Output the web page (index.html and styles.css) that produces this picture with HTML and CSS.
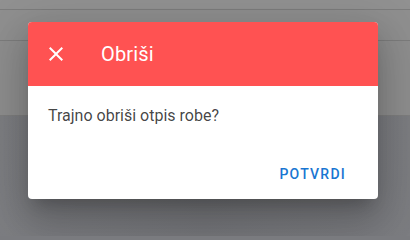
FILE: index.html
```html
<!DOCTYPE html>
<html lang="hr">
<head>
<meta charset="utf-8">
<title>Obriši</title>
<link rel="stylesheet" href="styles.css">
</head>
<body>
<div class="page">
  <div class="bg-top"></div>
  <div class="bg-head"><span class="bg-label">NAZIV ARTIKLA</span></div>
  <div class="bg-row"></div>
  <div class="bg-rest"></div>
</div>
<div class="dialog">
  <div class="dialog-bar">
    <button class="close-btn" aria-label="Zatvori">
      <svg viewBox="0 0 24 24" width="24" height="24"><path d="M19 6.41L17.59 5 12 10.59 6.41 5 5 6.41 10.59 12 5 17.59 6.41 19 12 13.41 17.59 19 19 17.59 13.41 12z" fill="#fff"/></svg>
    </button>
    <div class="dialog-title">Obriši</div>
  </div>
  <div class="dialog-text">Trajno obriši otpis robe?</div>
  <div class="dialog-actions">
    <button class="confirm-btn">Potvrdi</button>
  </div>
</div>
</body>
</html>
```
FILE: styles.css
```css
html {
  background: #7a7b7f;
}
html, body {
  margin: 0;
  padding: 0;
}
body {
  width: 410px;
  min-height: 219px;
  overflow: hidden;
  background: #7a7b7f;
  font-family: Roboto, "Noto Sans", sans-serif;
  position: relative;
}
.page {
  display: flex;
  flex-direction: column;
}
.bg-top {
  height: 9px;
  background: #919191;
  border-bottom: 1px solid #7c7c7c;
}
.bg-head {
  height: 31px;
  background: #8f8f8f;
  border-bottom: 1px solid #7c7c7c;
  padding-left: 48px;
  box-sizing: border-box;
}
.bg-label {
  display: block;
  padding-top: 10px;
  font-size: 12px;
  font-weight: 700;
  color: #2a2a2a;
  letter-spacing: 0.5px;
}
.bg-row {
  height: 74px;
  background: #8e8e8e;
  border-bottom: 1px solid #7e7e7e;
}
.bg-rest {
  height: 120px;
  background: linear-gradient(90deg, #7d7e82 0%, #76777b 50%, #7c7d81 100%);
}
.dialog {
  position: absolute;
  left: 28px;
  top: 22px;
  width: 350px;
  height: 177px;
  background: #fff;
  border-radius: 4px;
  overflow: hidden;
  box-shadow: 0 11px 15px -7px rgba(0,0,0,.2), 0 24px 38px 3px rgba(0,0,0,.14), 0 9px 46px 8px rgba(0,0,0,.12);
  display: flex;
  flex-direction: column;
}
.dialog-bar {
  height: 64px;
  background: #ff5252;
  display: flex;
  align-items: center;
  padding-left: 16px;
  box-sizing: border-box;
  flex-shrink: 0;
}
.close-btn {
  width: 24px;
  height: 24px;
  padding: 0;
  margin: 0;
  border: 0;
  background: none;
  display: flex;
  align-items: center;
  justify-content: center;
}
.dialog-title {
  margin-left: 33px;
  color: #fff;
  font-size: 20px;
  font-weight: 400;
  letter-spacing: 0.15px;
  line-height: 24px;
}
.dialog-text {
  padding: 18px 20px 0 20px;
  font-size: 16px;
  line-height: 24px;
  color: rgba(0,0,0,.74);
}
.dialog-actions {
  margin-top: auto;
  display: flex;
  justify-content: flex-end;
  padding: 8px 16px 7px 8px;
}
.confirm-btn {
  height: 36px;
  padding: 0 16px;
  border: 0;
  background: none;
  font-family: Roboto, "Noto Sans", sans-serif;
  font-size: 14px;
  font-weight: 500;
  letter-spacing: 1.25px;
  text-transform: uppercase;
  color: #1976d2;
}
```
